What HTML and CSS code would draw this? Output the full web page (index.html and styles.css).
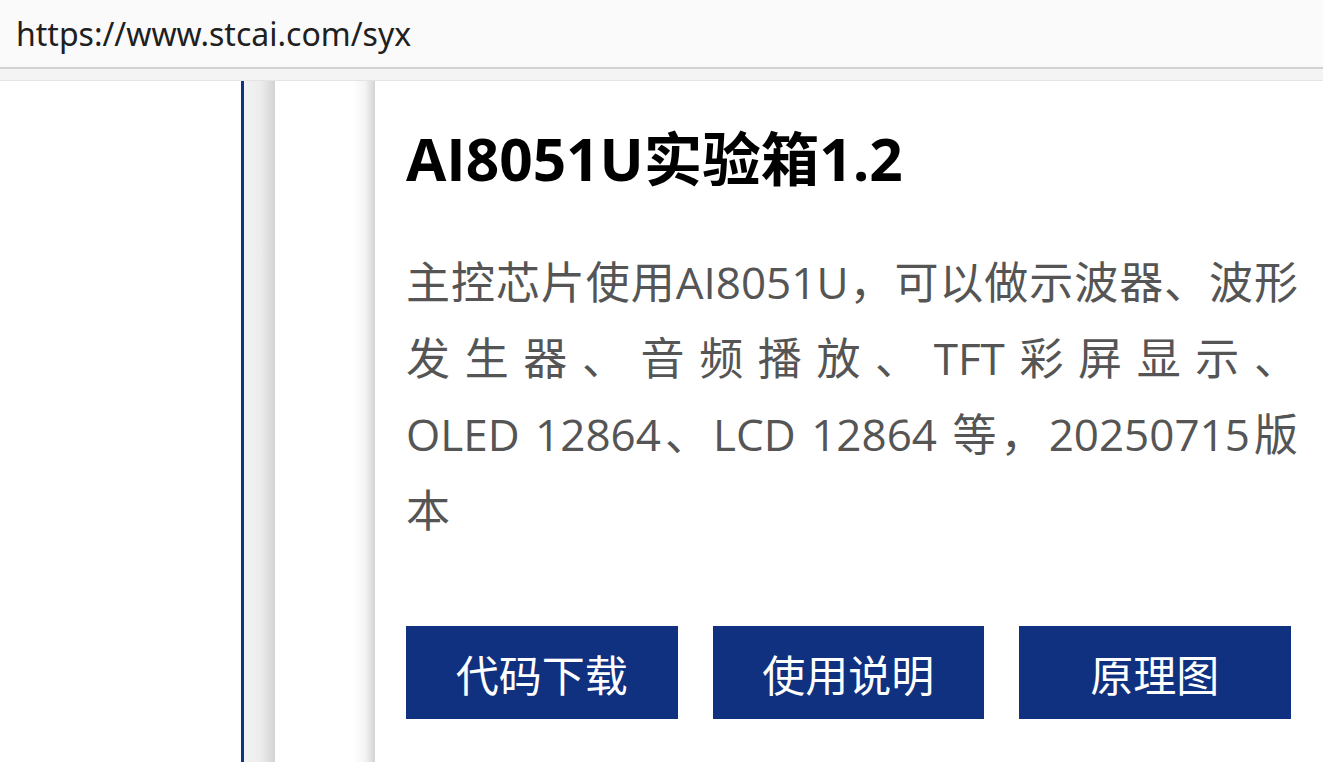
FILE: index.html
```html
<!DOCTYPE html>
<html lang="zh-CN">
<head>
<meta charset="utf-8">
<title>AI8051U实验箱1.2</title>
<link rel="stylesheet" href="styles.css">
</head>
<body>
<header class="urlbar">https://www.stcai.com/syx</header>
<div class="tabstrip"></div>
<main class="page">
  <div class="left-blank"></div>
  <div class="rule"></div>
  <div class="gutter"></div>
  <div class="pad"></div>
  <section class="card">
    <h1 class="title">AI8051U实验箱1.2</h1>
    <p class="desc">主控芯片使用AI8051U，可以做示波器、波形发生器、音频播放、TFT彩屏显示、OLED&nbsp;12864、LCD 12864 等，20250715版本</p>
    <div class="actions">
      <a class="btn" href="#">代码下载</a>
      <a class="btn" href="#">使用说明</a>
      <a class="btn" href="#">原理图</a>
    </div>
  </section>
</main>
</body>
</html>
```

FILE: styles.css
```css
html, body {
  margin: 0;
  padding: 0;
  background: #ffffff;
}
body {
  width: 1323px;
  height: 762px;
  overflow: hidden;
  font-family: "Open Sans", "Noto Sans CJK SC", sans-serif;
}
.urlbar {
  height: 69px;
  box-sizing: border-box;
  background: #fafafa;
  border-bottom: 2px solid #d2d2d2;
  padding-left: 16px;
  font-family: "Noto Sans", "Open Sans", sans-serif;
  font-size: 32px;
  line-height: 67px;
  color: #202020;
}
.tabstrip {
  height: 12px;
  box-sizing: border-box;
  background: #f4f4f4;
  border-bottom: 1px solid #e4e4e4;
}
.page {
  display: flex;
  height: 681px;
}
.left-blank {
  width: 241px;
  flex: none;
  background: #ffffff;
}
.rule {
  width: 3px;
  flex: none;
  background: #13357f;
}
.gutter {
  width: 31px;
  flex: none;
  background: linear-gradient(to right, #f3f3f3 0%, #ececec 55%, #d3d3d3 100%);
}
.pad {
  width: 100px;
  flex: none;
  background: linear-gradient(to right, #ffffff 0, #ffffff 78px, #f4f4f4 90px, #d4d4d4 100px);
}
.card {
  flex: 1;
  background: #ffffff;
  padding: 45px 25px 0 31px;
}
.title {
  margin: 0;
  font-size: 58.5px;
  line-height: 64px;
  font-weight: 700;
  color: #000000;
}
.desc {
  margin: 54px 0 0;
  font-size: 44px;
  line-height: 76px;
  color: #555555;
  text-align: justify;
}
.actions {
  display: flex;
  gap: 35px;
  margin-top: 78px;
}
.btn {
  width: 271.5px;
  height: 93px;
  display: flex;
  align-items: center;
  justify-content: center;
  background: #10317f;
  color: #ffffff;
  font-family: "Noto Sans CJK SC", sans-serif;
  font-size: 43px;
  text-decoration: none;
}
```
